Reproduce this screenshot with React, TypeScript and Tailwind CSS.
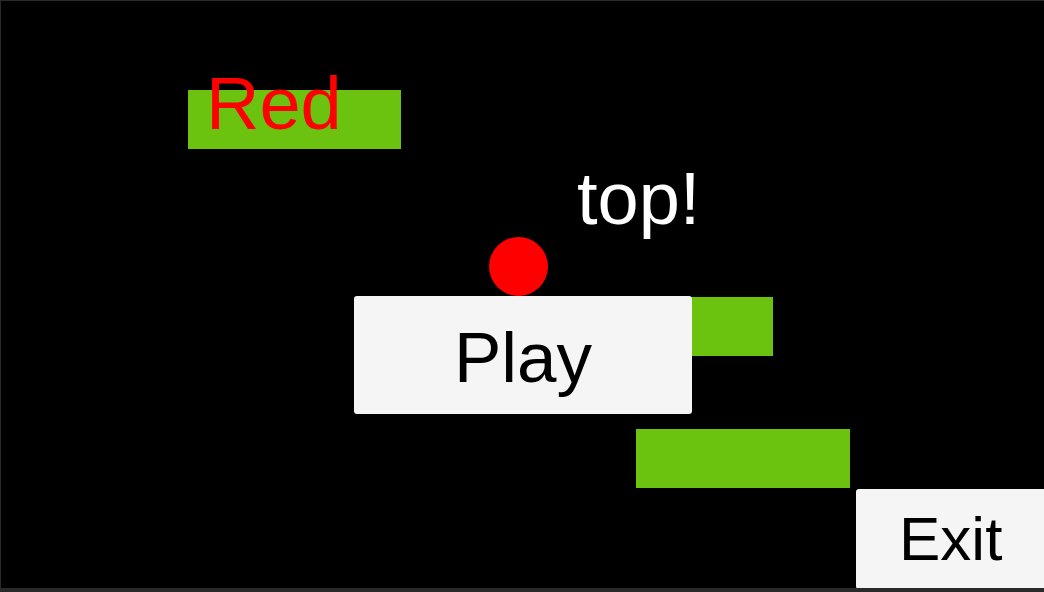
import React from 'react';

const font = { fontFamily: '"Liberation Sans", Arial, sans-serif' };

export default function App() {
  return (
    <div className="w-[1044px] h-[592px] bg-[#2a2a2a] pt-px pl-px pb-[4px] overflow-hidden" style={font}>
      {/* game canvas: sprites sit at their scene coordinates */}
      <div className="relative w-full h-full bg-black overflow-hidden">
        <div className="absolute left-[187px] top-[89px] w-[213px] h-[59px] bg-[#6bc20f]" />
        <span className="absolute left-[205px] top-[66px] text-[74px] leading-none text-[#ff0000]">Red</span>

        <span className="absolute left-[576px] top-[161px] text-[74px] leading-none text-white">top!</span>

        <div className="absolute left-[559px] top-[296px] w-[213px] h-[59px] bg-[#6bc20f]" />
        <div className="absolute left-[488px] top-[236px] w-[59px] h-[59px] rounded-full bg-[#ff0000]" />

        <button className="absolute left-[353px] top-[295px] w-[338px] h-[118px] rounded-[3px] bg-[#f5f5f5] flex items-center justify-center pt-[4px] text-[71px] leading-none text-black">
          Play
        </button>

        <div className="absolute left-[635px] top-[428px] w-[214px] h-[59px] bg-[#6bc20f]" />

        <button className="absolute left-[855px] top-[488px] w-[200px] h-[100px] rounded-[3px] bg-[#f5f5f5] flex items-center pl-[43px] text-[62px] leading-none text-black">
          Exit
        </button>
      </div>
    </div>
  );
}
